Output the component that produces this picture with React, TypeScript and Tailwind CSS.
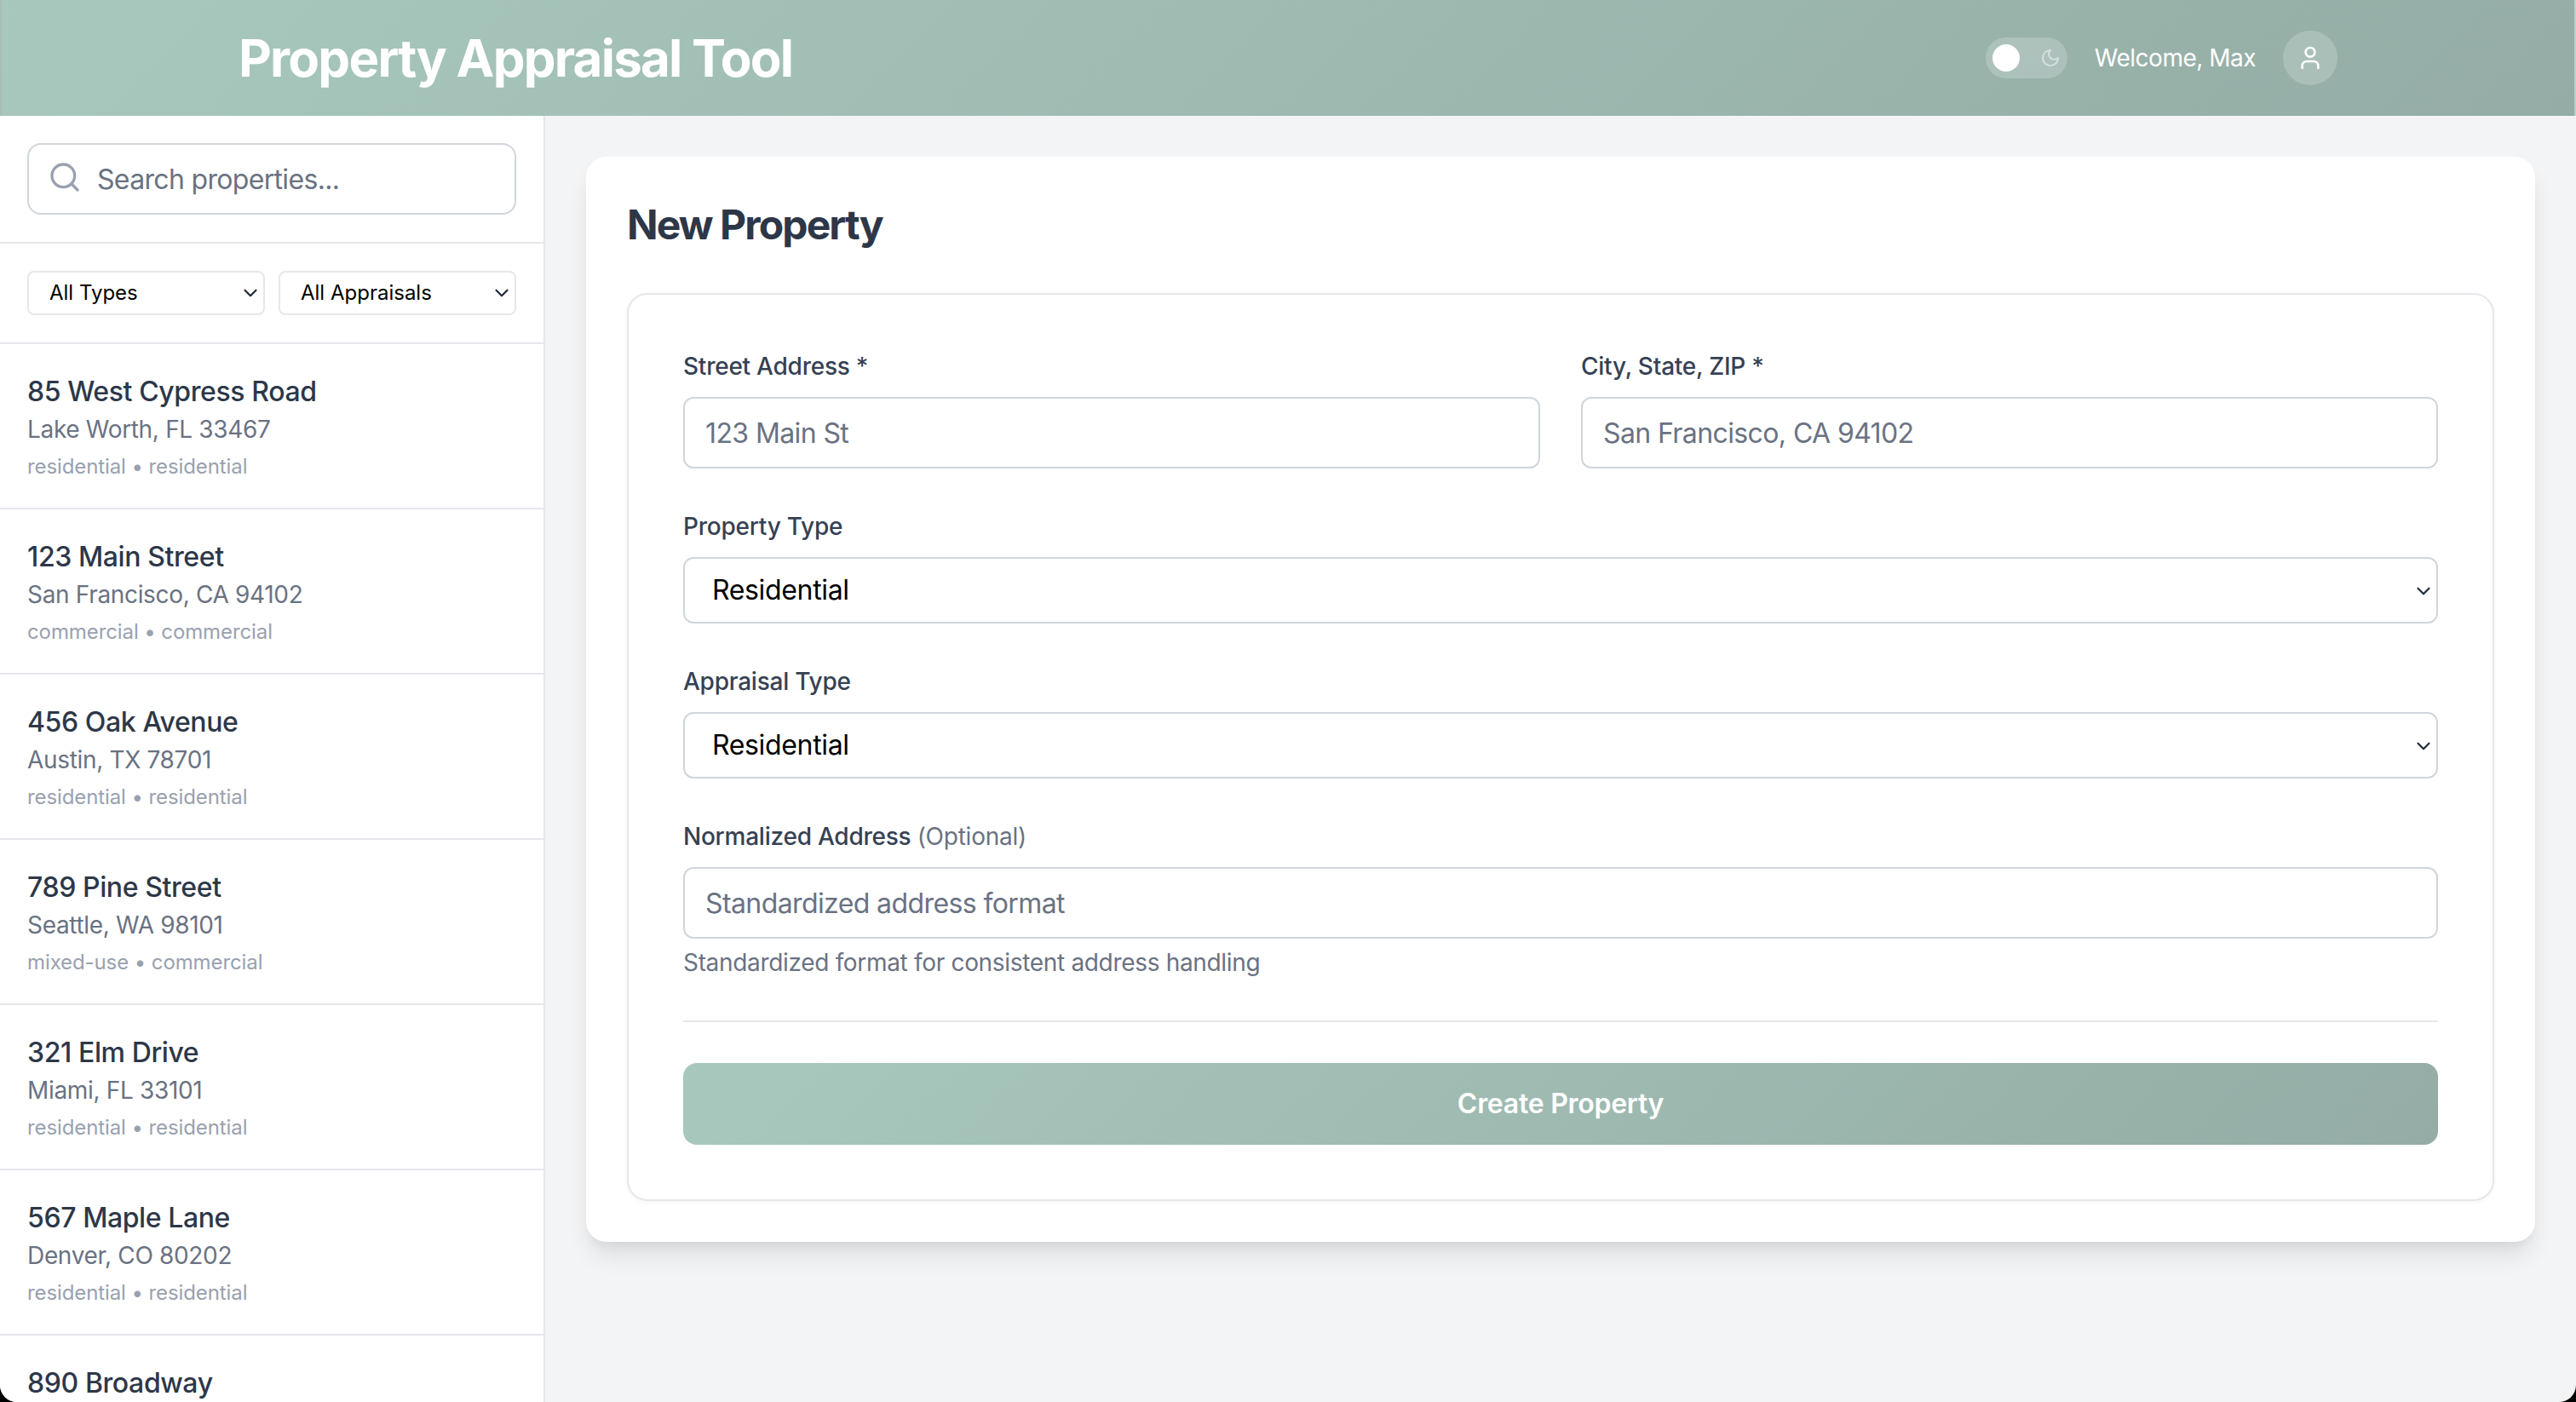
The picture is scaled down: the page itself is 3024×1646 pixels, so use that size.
import { Search, User, ChevronDown } from 'lucide-react'

const properties = [
  { street: '85 West Cypress Road', city: 'Lake Worth, FL 33467', tags: 'residential • residential' },
  { street: '123 Main Street', city: 'San Francisco, CA 94102', tags: 'commercial • commercial' },
  { street: '456 Oak Avenue', city: 'Austin, TX 78701', tags: 'residential • residential' },
  { street: '789 Pine Street', city: 'Seattle, WA 98101', tags: 'mixed-use • commercial' },
  { street: '321 Elm Drive', city: 'Miami, FL 33101', tags: 'residential • residential' },
  { street: '567 Maple Lane', city: 'Denver, CO 80202', tags: 'residential • residential' },
  { street: '890 Broadway' },
]

function FieldLabel({ children }: { children: React.ReactNode }) {
  return <label className="block text-[28px] leading-[40px] tracking-[-0.24px] font-medium text-gray-700 mb-[16px]">{children}</label>
}

function TextField({ placeholder }: { placeholder: string }) {
  return (
    <input
      placeholder={placeholder}
      className="block w-full h-[84px] px-[24px] border-2 border-gray-300 rounded-[12px] bg-white text-[32px] tracking-[-0.6px] placeholder:text-gray-500 outline-none"
    />
  )
}

function BigSelect() {
  return (
    <div className="relative">
      <select className="block w-full h-[78px] pl-[32px] border-2 border-gray-300 rounded-[12px] bg-white text-[32px] tracking-[-0.35px] text-black appearance-none outline-none">
        <option>Residential</option>
      </select>
      <ChevronDown className="absolute right-[4px] top-[27px] w-[26px] h-[26px] text-gray-800 pointer-events-none" strokeWidth={2} />
    </div>
  )
}

function SmallSelect({ label }: { label: string }) {
  return (
    <div className="relative flex-1">
      <select className="block w-full h-[52px] pl-[24px] border-2 border-gray-200 rounded-[8px] bg-white text-[24px] text-black appearance-none outline-none">
        <option>{label}</option>
      </select>
      <ChevronDown className="absolute right-[4px] top-[13px] w-[26px] h-[26px] text-gray-800 pointer-events-none" strokeWidth={2} />
    </div>
  )
}

export default function App() {
  return (
    <div className="h-[1646px] bg-black overflow-hidden font-['Inter',sans-serif]">
      <div className="flex flex-col h-full bg-gray-100 rounded-b-[20px] overflow-hidden">
        <header className="h-[136px] shrink-0 border-x-2 border-white/20 bg-[linear-gradient(135deg,#a8c8bd,#94aca5)]">
          <div className="flex items-center justify-between h-full max-w-[2560px] mx-auto px-[48px]">
            <h1 className="text-[60px] font-bold tracking-[-1.76px] text-white">Property Appraisal Tool</h1>
            <div className="flex items-center gap-[32px]">
              <div className="flex items-center justify-between w-[96px] h-[48px] pl-[8px] pr-[8px] rounded-full bg-white/20">
                <span className="w-[32px] h-[32px] rounded-full bg-white" />
                <svg className="w-[24px] h-[24px] text-white/50" viewBox="0 0 24 24" fill="none" stroke="currentColor" strokeWidth={2} strokeLinecap="round" strokeLinejoin="round">
                  <path d="M12 3a6 6 0 0 0 9 9 9 9 0 1 1-9-9Z" />
                </svg>
              </div>
              <span className="text-[28px] tracking-[-0.5px] text-white">Welcome, Max</span>
              <div className="flex items-center justify-center w-[64px] h-[64px] rounded-full bg-white/20">
                <User className="w-[32px] h-[32px] text-white" strokeWidth={2} />
              </div>
            </div>
          </div>
        </header>

        <div className="flex flex-1 min-h-0">
          <aside className="flex flex-col w-[640px] shrink-0 bg-white border-r-2 border-gray-200 overflow-hidden">
            <div className="p-[32px] border-b-2 border-gray-200">
              <div className="relative">
                <Search className="absolute left-[24px] top-[20px] w-[40px] h-[40px] text-gray-400" strokeWidth={2} />
                <input
                  placeholder="Search properties..."
                  className="block w-full h-[84px] pl-[80px] pr-[24px] border-2 border-gray-300 rounded-[16px] text-[32px] tracking-[-0.67px] placeholder:text-gray-500 outline-none"
                />
              </div>
            </div>
            <div className="flex gap-[16px] p-[32px] border-b-2 border-gray-200">
              <SmallSelect label="All Types" />
              <SmallSelect label="All Appraisals" />
            </div>
            <ul>
              {properties.map((p) => (
                <li key={p.street} className="p-[32px] border-b-2 border-gray-200">
                  <div className="text-[32px] leading-[48px] tracking-[-0.4px] font-medium text-[#2d3748]">{p.street}</div>
                  {p.city && <div className="text-[28px] leading-[40px] tracking-[-0.33px] text-gray-500">{p.city}</div>}
                  {p.tags && <div className="mt-[8px] text-[24px] leading-[32px] tracking-[-0.1px] text-gray-400">{p.tags}</div>}
                </li>
              ))}
            </ul>
          </aside>

          <main className="flex-1 p-[48px]">
            <div className="p-[48px] bg-white rounded-[24px] shadow-[0_20px_30px_-6px_rgba(0,0,0,0.1),0_8px_12px_-4px_rgba(0,0,0,0.05)]">
              <h2 className="mb-[48px] text-[48px] leading-[64px] font-bold tracking-[-1.9px] text-[#2d3748]">New Property</h2>
              <form className="flex flex-col gap-[48px] p-[64px] border-2 border-gray-200 rounded-[24px] shadow-[0_2px_4px_rgba(0,0,0,0.04)]">
                <div className="grid grid-cols-2 gap-[48px]">
                  <div>
                    <FieldLabel>Street Address *</FieldLabel>
                    <TextField placeholder="123 Main St" />
                  </div>
                  <div>
                    <FieldLabel>City, State, ZIP *</FieldLabel>
                    <TextField placeholder="San Francisco, CA 94102" />
                  </div>
                </div>
                <div>
                  <FieldLabel>Property Type</FieldLabel>
                  <BigSelect />
                </div>
                <div>
                  <FieldLabel>Appraisal Type</FieldLabel>
                  <BigSelect />
                </div>
                <div>
                  <FieldLabel>
                    Normalized Address <span className="font-normal text-gray-500">(Optional)</span>
                  </FieldLabel>
                  <TextField placeholder="Standardized address format" />
                  <p className="mt-[8px] text-[28px] leading-[40px] tracking-[-0.32px] text-gray-500">Standardized format for consistent address handling</p>
                </div>
                <div className="pt-[48px] border-t-2 border-gray-200">
                  <button
                    type="button"
                    className="w-full h-[96px] rounded-[16px] bg-[linear-gradient(135deg,#a8c8bd,#94aca5)] text-[32px] font-semibold tracking-[-0.26px] text-white"
                  >
                    Create Property
                  </button>
                </div>
              </form>
            </div>
          </main>
        </div>
      </div>
    </div>
  )
}
